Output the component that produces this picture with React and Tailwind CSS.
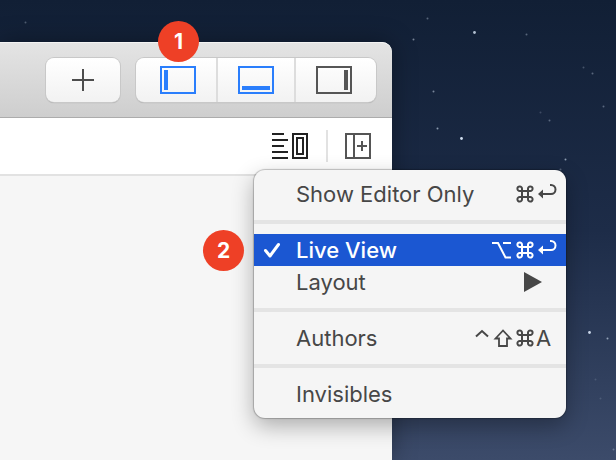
import React from 'react';

const stars = [
  [427, 18, 0.35], [413, 39, 0.5], [474, 32, 0.8], [526, 34, 0.35], [583, 67, 0.25],
  [592, 73, 0.35], [433, 91, 0.5], [603, 106, 0.35], [540, 112, 0.2], [549, 120, 0.35],
  [437, 128, 0.6], [461, 138, 0.95], [565, 159, 0.6], [560, 169, 0.3], [589, 332, 0.9],
  [607, 338, 0.6], [595, 379, 0.15], [600, 398, 0.15], [613, 449, 0.3], [25, 22, 0.3],
];

function Sky() {
  return (
    <svg className="absolute inset-0" width="100%" height="100%" aria-hidden="true">
      {stars.map(([x, y, o]) => (
        <circle key={`${x}-${y}`} cx={x + 0.5} cy={y + 0.5} r={o > 0.7 ? 1.4 : 1} fill="#dbe8f8" opacity={o} />
      ))}
    </svg>
  );
}

function Badge({ children, className }) {
  return (
    <span
      className={`absolute z-20 flex size-[41px] items-center justify-center rounded-full bg-[#ee4026] text-[21px] leading-none font-bold text-white ${className}`}
    >
      {children}
    </span>
  );
}

function PanelIcon({ bar }) {
  return (
    <svg width="36" height="28" fill="none" aria-hidden="true">
      <rect x="1" y="1" width="34" height="26" stroke="currentColor" strokeWidth="2" />
      {bar === 'left' && <rect x="4" y="4" width="4" height="20" fill="currentColor" />}
      {bar === 'bottom' && <rect x="4" y="20" width="28" height="4" fill="currentColor" />}
      {bar === 'right' && <rect x="28" y="4" width="4" height="20" fill="currentColor" />}
    </svg>
  );
}

function EditorModeIcon() {
  return (
    <svg width="36" height="26" fill="none" stroke="currentColor" strokeWidth="2" aria-hidden="true">
      <path d="M0 1h12M0 7h16M0 13h12M0 19h16M0 25h16" />
      <rect x="21" y="1" width="14" height="24" />
      <rect x="25" y="5" width="6" height="16" />
    </svg>
  );
}

function AddEditorIcon() {
  return (
    <svg width="26" height="26" fill="none" stroke="currentColor" strokeWidth="2" aria-hidden="true">
      <rect x="1" y="1" width="24" height="24" />
      <path d="M9 1v24M12 13h10M17 8v10" />
    </svg>
  );
}

// Modifier and key symbols, drawn on a 22x22 cell
const keySymbols = {
  command: (
    <path d="M8 8H5.800a2.300 2.300 0 1 1 2.200-2.200v10.400a2.300 2.300 0 1 1-2.200-2.200h10.400a2.300 2.300 0 1 1-2.200 2.200V5.800a2.300 2.300 0 1 1 2.200 2.200z" />
  ),
  option: <path d="M0 4h6L13.500 18.500H19M11 4h8" />,
  shift: <path d="M11 3.500 3.500 11.500h3.500v7.500h8v-7.500h3.500z" strokeWidth="1.800" />,
  control: <path d="M6 9.500 12 4l6 5.500" />,
  return: (
    <>
      <path d="M6 11h9a4.500 4.500 0 0 0 0-9H14" />
      <path d="M2 11l5-4.500v9z" fill="currentColor" stroke="none" />
    </>
  ),
};

function Key({ name }) {
  const symbol = keySymbols[name];
  return (
    <kbd className="flex w-[22px] font-['Inter','DejaVu_Sans',sans-serif] text-[22px]">
      {symbol ? (
        <svg width="22" height="22" fill="none" stroke="currentColor" strokeWidth="2" role="img" aria-label={name}>
          {symbol}
        </svg>
      ) : (
        name
      )}
    </kbd>
  );
}

function MenuItem({ label, keys = [], checked, submenu, children }) {
  return (
    <li role="none" className="relative">
      {children}
      <button
        type="button"
        role={checked ? 'menuitemcheckbox' : 'menuitem'}
        aria-checked={checked}
        className={`flex h-8 w-full items-center pr-2 text-left text-[22px] leading-8 ${
          checked ? 'bg-[#1b57d2] font-medium text-white' : 'text-[#474747]'
        }`}
      >
        <span className="flex w-[42px] shrink-0 pl-[9px]">
          {checked && (
            <svg width="18" height="18" fill="none" stroke="currentColor" strokeWidth="3" strokeLinecap="round" strokeLinejoin="round" aria-hidden="true">
              <path d="M2.500 9.500 7 15 15.500 3.500" />
            </svg>
          )}
        </span>
        <span className="flex-1 whitespace-nowrap">{label}</span>
        {keys.map((key) => (
          <Key key={key} name={key} />
        ))}
        {submenu && (
          <svg className="mr-4" width="18" height="20" fill="currentColor" aria-hidden="true">
            <path d="M0 0 18 10 0 20z" />
          </svg>
        )}
      </button>
    </li>
  );
}

function Separator() {
  return <li role="separator" className="my-2.5 h-1 bg-[#e4e4e4]" />;
}

function EditorMenu() {
  return (
    <ul
      role="menu"
      className="absolute top-[52px] -right-[174px] z-10 w-[312px] rounded-[11px] bg-[#f5f5f5] py-2 shadow-[0_0_1px_1px_rgba(0,0,0,0.22),0_8px_22px_rgba(0,0,0,0.3)]"
    >
      <MenuItem label="Show Editor Only" keys={['command', 'return']} />
      <Separator />
      <MenuItem label="Live View" keys={['option', 'command', 'return']} checked>
        <Badge className="-top-1 -left-[51px]">2</Badge>
      </MenuItem>
      <MenuItem label="Layout" submenu />
      <Separator />
      <MenuItem label="Authors" keys={['control', 'shift', 'command', 'A']} />
      <Separator />
      <MenuItem label="Invisibles" />
    </ul>
  );
}

export default function App() {
  return (
    <div className="relative flex min-h-screen flex-col overflow-hidden bg-linear-to-b from-[#111f35] via-[#1d2c48] to-[#3c4b6a] pt-[42px] font-['Inter','Liberation_Sans',sans-serif]">
      <Sky />
      <main className="relative mr-[224px] flex flex-1 flex-col rounded-tr-[10px] bg-[#f6f6f6] shadow-[0_0_24px_rgba(0,0,0,0.35)]">
        <header className="flex h-[76px] items-start justify-end gap-4 rounded-tr-[10px] border-t border-b border-t-[#f3f3f3] border-b-[#acacac] bg-linear-to-b from-[#e4e4e4] to-[#cecece] pt-[15px] pr-4">
          <button
            type="button"
            aria-label="Add"
            className="flex h-[44px] w-[74px] items-center justify-center rounded-[8px] bg-linear-to-b from-white to-[#f2f2f2] text-[#4d4d4d] shadow-[0_0_0_1px_#c8c8c8,0_1px_1px_#9a9a9a]"
          >
            <svg width="22" height="22" stroke="currentColor" strokeWidth="2" aria-hidden="true">
              <path d="M0 11h22M11 0v22" />
            </svg>
          </button>
          <div className="flex h-[44px] w-[240px] rounded-[8px] bg-linear-to-b from-white to-[#f2f2f2] shadow-[0_0_0_1px_#c8c8c8,0_1px_1px_#9a9a9a]">
            <button type="button" aria-label="Navigator" className="relative flex w-20 items-center justify-center pl-1 text-[#2a7efc]">
              <PanelIcon bar="left" />
              <Badge className="bottom-10 left-[22px]">1</Badge>
            </button>
            <button type="button" aria-label="Debug area" className="flex w-20 items-center justify-center border-x-2 border-[#dddddd] text-[#2a7efc]">
              <PanelIcon bar="bottom" />
            </button>
            <button type="button" aria-label="Inspectors" className="flex w-20 items-center justify-center pr-1 text-[#555555]">
              <PanelIcon bar="right" />
            </button>
          </div>
        </header>
        <div className="relative flex h-[58px] items-center justify-end border-b-2 border-[#e2e2e2] bg-white pr-[21px]">
          <button type="button" aria-label="Editor mode" className="text-[#222222]">
            <EditorModeIcon />
          </button>
          <span className="mr-[17px] ml-[18px] h-8 w-0.5 bg-[#e2e2e2]" />
          <button type="button" aria-label="Add editor" className="text-[#555555]">
            <AddEditorIcon />
          </button>
          <EditorMenu />
        </div>
      </main>
    </div>
  );
}
